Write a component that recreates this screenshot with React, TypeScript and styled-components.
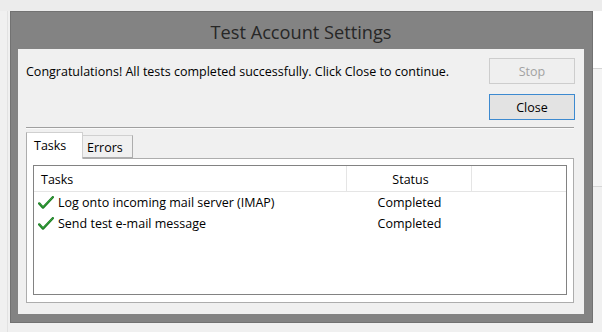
import React from 'react';
import styled, { createGlobalStyle } from 'styled-components';

const GlobalStyle = createGlobalStyle`
  html, body {
    margin: 0;
    padding: 0;
    background: #f0f0f0;
  }
  body {
    font-family: "Open Sans", "Noto Sans", sans-serif;
    font-size: 12.5px;
    color: #000;
  }
`;

const Desktop = styled.div`
  width: 602px;
  height: 332px;
  overflow: hidden;
  display: grid;
  grid-template-columns: 10px 583px 1fr;
  grid-template-rows: 11px 312px 1fr;
  background: #f0f0f0;
`;

const BackTop = styled.div`
  grid-column: 1 / 4;
  background: #ececec;
`;

const BackLeft = styled.div`
  grid-row: 2 / 4;
  background: #f0f0f0;
  border-right: 1px solid #e2e2e2;
  margin-right: 2px;
`;

const BackRight = styled.div`
  grid-row: 2 / 4;
  grid-column: 3;
  display: grid;
  grid-template-rows: 58px 118px 1fr;
`;

const BackBand = styled.div<{ tone: string; line?: boolean }>`
  background: ${p => p.tone};
  border-bottom: ${p => (p.line ? '1px solid #d6d6d6' : 'none')};
`;

const BackBottom = styled.div`
  grid-column: 1 / 3;
  background: #f0f0f0;
`;

const Dialog = styled.div`
  grid-column: 2;
  grid-row: 2;
  box-sizing: border-box;
  background: #838383;
  border: 1px solid #727272;
  display: flex;
  flex-direction: column;
  padding: 0 8px 8px 7px;
`;

const TitleBar = styled.div`
  height: 37px;
  display: flex;
  align-items: center;
  justify-content: center;
  font-size: 18.2px;
  color: #272727;
  padding-top: 2px;
  box-sizing: border-box;
`;

const Body = styled.div`
  flex: 1;
  background: #f0f0f0;
  display: flex;
  flex-direction: column;
  padding: 9px 9px 11px 8px;
`;

const TopRow = styled.div`
  display: flex;
  justify-content: space-between;
`;

const Message = styled.div`
  height: 26px;
  display: flex;
  align-items: center;
  white-space: nowrap;
`;

const ButtonColumn = styled.div`
  display: flex;
  flex-direction: column;
  gap: 10px;
`;

const Button = styled.button<{ primary?: boolean }>`
  width: 86px;
  height: 26px;
  box-sizing: border-box;
  font-family: inherit;
  font-size: 12.5px;
  padding: 0;
  border: 1px solid ${p => (p.primary ? '#3d8ad0' : '#cdcdcd')};
  background: ${p => (p.primary ? '#e3e3e3' : '#efefef')};
  color: ${p => (p.primary ? '#000' : '#a2a2a2')};
`;

const Separator = styled.div`
  margin: 7px 1px 0 0;
  height: 1px;
  background: #a0a0a0;
  border-bottom: 1px solid #fbfbfb;
`;

const TabStrip = styled.div`
  margin: 3px 1px 0 0;
  display: flex;
  align-items: flex-end;
  height: 26px;
  position: relative;
  z-index: 1;
`;

const Tab = styled.div<{ active?: boolean }>`
  box-sizing: border-box;
  height: ${p => (p.active ? '27px' : '23px')};
  margin-bottom: ${p => (p.active ? '-1px' : '0')};
  width: ${p => (p.active ? '57px' : '51px')};
  padding: ${p => (p.active ? '4px 0 0 7px' : '3px 0 0 4px')};
  background: ${p => (p.active ? '#ffffff' : '#f0f0f0')};
  border: 1px solid #d0d0d0;
  border-bottom: ${p => (p.active ? 'none' : '1px solid #adadad')};
  border-left-color: ${p => (p.active ? '#adadad' : '#d0d0d0')};
  border-right: ${p => (p.active ? '1px solid #d0d0d0' : '1px solid #adadad')};
  margin-left: ${p => (p.active ? '0' : '-1px')};
`;

const TabPanel = styled.div`
  margin-right: 1px;
  flex: 1;
  background: #fff;
  border: 1px solid #adadad;
  padding: 6px 6px 7px 6px;
  display: flex;
`;

const ListView = styled.div`
  flex: 1;
  border: 1px solid #828282;
  background: #fff;
  display: flex;
  flex-direction: column;
`;

const Row = styled.div<{ header?: boolean }>`
  display: grid;
  grid-template-columns: 313px 125px 1fr;
  height: ${p => (p.header ? '25px' : '21px')};
  border-bottom: ${p => (p.header ? '1px solid #e5e5e5' : 'none')};
  align-items: center;
`;

const Cell = styled.div<{ center?: boolean; divider?: boolean }>`
  height: 100%;
  display: flex;
  align-items: center;
  justify-content: ${p => (p.center ? 'center' : 'flex-start')};
  padding-left: ${p => (p.center ? '0' : '4px')};
  border-right: ${p => (p.divider ? '1px solid #e5e5e5' : 'none')};
  white-space: nowrap;
  gap: 4px;
`;

const HeaderLabel = styled.span`
  padding-left: 3px;
  padding-top: 1px;
`;

const CheckMark = () => (
  <svg width="16" height="14" viewBox="0 0 16 14">
    <path d="M1.2 7.4 L5 11.6 L14.8 1.2" fill="none" stroke="#1d7f26" strokeWidth="2.4" strokeLinecap="round" strokeLinejoin="round" />
    <path d="M1.6 7.6 L5 11.2 L14.4 1.6" fill="none" stroke="#38a43a" strokeWidth="0.9" strokeLinecap="round" strokeLinejoin="round" />
  </svg>
);

const tasks = [
  { name: 'Log onto incoming mail server (IMAP)', status: 'Completed' },
  { name: 'Send test e-mail message', status: 'Completed' },
];

export default function App() {
  return (
    <>
      <GlobalStyle />
      <Desktop>
        <BackTop />
        <BackLeft />
        <Dialog>
          <TitleBar>Test Account Settings</TitleBar>
          <Body>
            <TopRow>
              <Message>Congratulations! All tests completed successfully. Click Close to continue.</Message>
              <ButtonColumn>
                <Button disabled>Stop</Button>
                <Button primary>Close</Button>
              </ButtonColumn>
            </TopRow>
            <Separator />
            <TabStrip>
              <Tab active>Tasks</Tab>
              <Tab>Errors</Tab>
            </TabStrip>
            <TabPanel>
              <ListView>
                <Row header>
                  <Cell divider><HeaderLabel>Tasks</HeaderLabel></Cell>
                  <Cell center divider><HeaderLabel>Status</HeaderLabel></Cell>
                  <Cell />
                </Row>
                {tasks.map(t => (
                  <Row key={t.name}>
                    <Cell>
                      <CheckMark />
                      <span>{t.name}</span>
                    </Cell>
                    <Cell center>{t.status}</Cell>
                    <Cell />
                  </Row>
                ))}
              </ListView>
            </TabPanel>
          </Body>
        </Dialog>
        <BackRight>
          <BackBand tone="#ffffff" line />
          <BackBand tone="#f4f4f4" line />
          <BackBand tone="#f0f0f0" />
        </BackRight>
        <BackBottom />
      </Desktop>
    </>
  );
}
